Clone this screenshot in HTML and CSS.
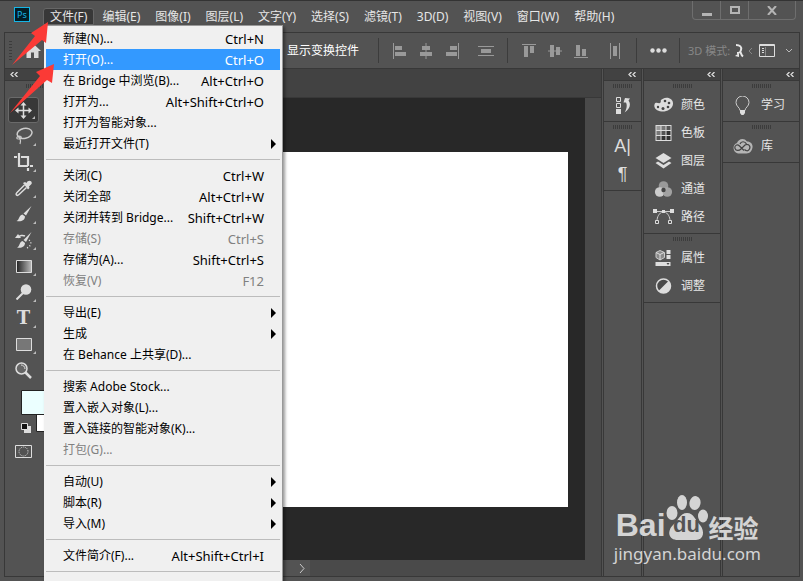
FILE: index.html
```html
<!DOCTYPE html>
<html lang="zh-CN">
<head>
	<meta charset="UTF-8">
	<title>Photoshop</title>
	<link rel="stylesheet" href="styles.css">
</head>
<body>
	<div class="app">
		<header class="titlebar">
			<span class="logo">Ps</span>
			<nav class="menubar">
				<button class="active">文件(F)</button>
				<button>编辑(E)</button>
				<button>图像(I)</button>
				<button>图层(L)</button>
				<button>文字(Y)</button>
				<button>选择(S)</button>
				<button>滤镜(T)</button>
				<button>3D(D)</button>
				<button>视图(V)</button>
				<button>窗口(W)</button>
				<button>帮助(H)</button>
			</nav>
			<div class="winbtns">
				<button aria-label="最小化"><svg width="10" height="11"><path d="M0 8h10v3H0z" fill="#b4b4b4"/></svg></button>
				<button aria-label="最大化"><svg width="10" height="8"><path d="M1 1h8v6H1z" fill="none" stroke="#b4b4b4" stroke-width="2"/></svg></button>
				<button class="close" aria-label="关闭"><svg width="10" height="9"><path d="M1 0l8 9M9 0l-8 9" stroke="#b4b4b4" stroke-width="2"/></svg></button>
			</div>
		</header>

		<div class="frame">
			<div class="options">
				<div class="opt-left">
					<span class="vgrip"></span>
					<button class="home" aria-label="主页"><svg width="17" height="15" viewBox="0 0 17 15"><path d="M8.5 0L17 8h-2.500v7H10V9.500H7V15H2.500V8H0z" fill="#dcdcdc"/></svg></button>
					<label class="transform"><input type="checkbox">显示变换控件</label>
				</div>
				<div class="opt-group">
					<button aria-label="左对齐"><svg width="14" height="16"><path d="M.5 0v16" stroke="#999"/><path d="M2 3h7v4H2zM2 9h11v4H2z" fill="#999"/></svg></button>
					<button aria-label="水平居中"><svg width="12" height="16"><path d="M6 0v16" stroke="#999"/><path d="M2 3h8v4H2zM0 9h12v4H0z" fill="#999"/></svg></button>
					<button aria-label="右对齐"><svg width="14" height="16"><path d="M13.500 0v16" stroke="#999"/><path d="M5 3h7v4H5zM1 9h11v4H1z" fill="#999"/></svg></button>
					<button class="dist" aria-label="垂直分布"><svg width="16" height="10"><path d="M0 .5h16M0 9.500h16" stroke="#999"/><path d="M3 3h10v4H3z" fill="#999"/></svg></button>
				</div>
				<div class="opt-group">
					<button aria-label="顶对齐"><svg width="14" height="14"><path d="M0 .5h14" stroke="#999"/><path d="M2 2h4v11H2zM8 2h4v7H8z" fill="#999"/></svg></button>
					<button aria-label="垂直居中"><svg width="14" height="12"><path d="M0 6h14" stroke="#999"/><path d="M2 0h4v12H2zM8 2h4v8H8z" fill="#999"/></svg></button>
					<button aria-label="底对齐"><svg width="14" height="14"><path d="M0 13.500h14" stroke="#999"/><path d="M2 1h4v11H2zM8 5h4v7H8z" fill="#999"/></svg></button>
					<button class="dist" aria-label="水平分布"><svg width="10" height="16"><path d="M.5 0v16M9.500 0v16" stroke="#999"/><path d="M3 3h4v10H3z" fill="#999"/></svg></button>
				</div>
				<button class="more" aria-label="更多"><svg width="17" height="5"><circle cx="2.500" cy="2.500" r="2.200" fill="#ddd"/><circle cx="8.500" cy="2.500" r="2.200" fill="#ddd"/><circle cx="14.500" cy="2.500" r="2.200" fill="#ddd"/></svg></button>
				<div class="mode">
					<span>3D 模式:</span>
					<svg class="orbit" width="18" height="14" viewBox="0 0 18 14"><path d="M1 1c4 0 6 2 5 5s-2 3-4 3M5 7c1 2 1 4 3 5.500" stroke="#e6e6e6" stroke-width="2" fill="none"/><path d="M0 12l4-3v4z" fill="#e6e6e6"/><path d="M17 4l-3 3 3 3" stroke="#888" fill="none"/></svg>
					<button aria-label="工作区"><svg width="16" height="13"><path d="M.5.5h15v12H.5z" fill="none" stroke="#ddd"/><path d="M1 1.500h14" stroke="#ddd"/><path d="M3 4h2v1H3zM3 6h2v1H3zM3 8h2v1H3z" fill="#ddd"/><path d="M6.500 3v9" stroke="#888"/></svg></button>
					<svg class="chev" width="8" height="6"><path d="M1 1l3 3 3-3" stroke="#bbb" fill="none"/></svg>
				</div>
			</div>

			<div class="workspace">
				<div class="tools">
					<div class="dockhead"><svg width="8" height="5"><path d="M3.500 0L1 2.500 3.500 5M7.500 0L5 2.500 7.500 5" stroke="#ddd" stroke-width="1.300" fill="none"/></svg></div>
					<span class="grip"></span>
					<button class="tool on" aria-label="移动"><svg width="17" height="17" viewBox="0 0 17 17"><path d="M8.500 2v13M2 8.500h13" stroke="#ddd" stroke-width="1.500"/><path d="M8.500 0l3 3.500h-6zM8.500 17l3-3.500h-6zM0 8.500l3.500-3v6zM17 8.500l-3.500-3v6z" fill="#ddd"/></svg></button>
					<button class="tool" aria-label="套索"><svg width="18" height="18" viewBox="0 0 18 18"><ellipse cx="9.500" cy="6.500" rx="7.500" ry="5" transform="rotate(-12 9 6)" fill="none" stroke="#ccc" stroke-width="1.500"/><path d="M4 9c-3 1-3 3 0 3s3-3 0-3c0 2 3 4 1 8" fill="none" stroke="#ccc" stroke-width="1.200"/></svg></button>
					<button class="tool" aria-label="裁剪"><svg width="19" height="18" viewBox="0 0 19 18"><path d="M5 0v13h9M0 4h3M7 4h7v9M14 15v3M16 13h3" fill="none" stroke="#ddd" stroke-width="2.200"/></svg></button>
					<button class="tool" aria-label="吸管"><svg width="17" height="17" viewBox="0 0 17 17"><path d="M9.500 5L2 12.500c-2 2 0 4 2 2L11.500 7.500" fill="none" stroke="#ddd" stroke-width="1.500"/><path d="M8 3l2-1 1.500 1C13-1 18 1 16.500 4L14 6.500 14.500 8 13 9.500z" fill="#ddd"/></svg></button>
					<button class="tool" aria-label="画笔"><svg width="16" height="16" viewBox="0 0 16 16"><path d="M15.500 0L10 9.500 7.500 7.500z" fill="#ddd"/><path d="M6.500 8.500L9 10.500c0 4-4 5.500-8.500 4.500 3-1 2-5.500 6-6.500z" fill="#ddd"/></svg></button>
					<button class="tool" aria-label="历史记录画笔"><svg width="18" height="17" viewBox="0 0 18 17"><path d="M16.500 0L11 10 8.500 8z" fill="#ddd"/><path d="M7.500 9L10 11c0 4-4 5.500-8 4.500 3-1 2-5.500 5.500-6.500z" fill="#ddd"/><path d="M3 6c1-3 5-3 7-2" stroke="#ddd" stroke-width="1.500" fill="none"/><path d="M0 6h6L3 2z" fill="#ddd"/><path d="M14 8c3 2 2 6-2 8" stroke="#ddd" stroke-width="1.500" stroke-dasharray="1 2" fill="none"/></svg></button>
					<button class="tool" aria-label="渐变"><svg width="16" height="13"><defs><linearGradient id="g"><stop stop-color="#222"/><stop offset="1" stop-color="#bbb"/></linearGradient></defs><path d="M.5.5h15v12H.5z" fill="url(#g)" stroke="#ddd"/></svg></button>
					<button class="tool" aria-label="减淡"><svg width="16" height="16" viewBox="0 0 16 16"><circle cx="10" cy="5.500" r="5.300" fill="#ddd"/><path d="M7 9l-6.500 6.500" stroke="#ddd" stroke-width="2"/></svg></button>
					<button class="tool letter">T</button>
					<button class="tool" aria-label="矩形"><svg width="16" height="13"><path d="M.5.5h15v12H.5z" fill="#777" stroke="#ddd"/></svg></button>
					<button class="tool plain" aria-label="缩放"><svg width="17" height="17" viewBox="0 0 17 17"><circle cx="6.500" cy="6.500" r="5.500" fill="#666" stroke="#ddd" stroke-width="1.500"/><path d="M10.500 10.500l5.500 5.500" stroke="#ddd" stroke-width="2.500"/><path d="M6 3c2 0 4 1.500 4 4" stroke="#ddd" fill="none"/></svg></button>
					<div class="swatches">
						<svg class="colors" width="40" height="44"><path d="M15.500 16.500h24v25h-24z" fill="#fff" stroke="#222"/><path d="M.5.5h24v24H.5z" fill="#ebffff" stroke="#222"/></svg>
						<svg class="reset" width="10" height="10"><path d="M3 3h7v7H3z" fill="#ddd"/><path d="M.5.500h6v6h-6z" fill="#111" stroke="#ddd"/></svg>
					</div>
					<button class="mask" aria-label="快速蒙版"><svg width="17" height="13"><path d="M.5.5h16v12H.5z" fill="none" stroke="#ddd"/><circle cx="8.500" cy="6.500" r="4.500" fill="none" stroke="#ddd" stroke-dasharray="1 1"/></svg></button>
				</div>

				<main class="document">
					<div class="tabs"></div>
					<div class="view">
						<div class="canvas"><div class="paper"></div></div>
						<div class="scroll"></div>
					</div>
					<div class="status">
						<svg width="7" height="11"><path d="M1 1l4 4.500L1 10" stroke="#ccc" fill="none"/></svg>
					</div>
				</main>

				<aside class="dock narrow">
					<div class="dockhead"><svg width="8" height="5"><path d="M3.500 0L1 2.500 3.500 5M7.500 0L5 2.500 7.500 5" stroke="#ddd" stroke-width="1.300" fill="none"/></svg></div>
					<section class="panel">
						<span class="grip"></span>
						<button aria-label="历史记录"><svg width="14" height="17" viewBox="0 0 14 17"><path d="M.5.5h4v4h-4zM.5 6.500h4v4h-4z" fill="none" stroke="#ddd"/><path d="M0 12h5v5H0z" fill="#ddd"/><path d="M7.500 5.500L9 1l5 .5-1.500 2c3 4 1 9-4 12 2-3 3-7 1.500-10z" fill="#ddd"/></svg></button>
					</section>
					<section class="panel">
						<span class="grip"></span>
						<button class="char">A|</button>
						<button class="char">¶</button>
					</section>
				</aside>

				<aside class="dock">
					<div class="dockhead"><svg width="8" height="5"><path d="M3.500 0L1 2.500 3.500 5M7.500 0L5 2.500 7.500 5" stroke="#ddd" stroke-width="1.300" fill="none"/></svg></div>
					<section class="panel">
						<span class="grip"></span>
						<button><svg width="20" height="16" viewBox="0 0 20 16"><path d="M9 2c5-3 11 0 10.500 5S13 15 8 14.500 0 11 1 7.500s5 0 6-2-1-2 2-3.500z" fill="#ddd"/><circle cx="11.500" cy="4" r="1.300" fill="#444"/><circle cx="15.500" cy="6" r="1.300" fill="#444"/><circle cx="14.500" cy="10" r="1.300" fill="#444"/><circle cx="9.500" cy="11.500" r="1.500" fill="#444"/><circle cx="4.500" cy="10" r="1.200" fill="#444"/></svg>颜色</button>
						<button><svg width="16" height="16" viewBox="0 0 16 16"><path d="M0 0h16v16H0z" fill="#ddd"/><path d="M1 1h4v4H1z" fill="#999"/><path d="M6 1h4v4H6zM1 6h4v4H1z" fill="#777"/><path d="M11 1h4v4h-4zM6 6h4v4H6zM1 11h4v4H1z" fill="#555"/><path d="M11 6h4v4h-4zM6 11h4v4H6zM11 11h4v4h-4z" fill="#333"/></svg>色板</button>
						<button><svg width="16" height="16" viewBox="0 0 16 16"><path d="M8 0l8 5-8 5-8-5z" fill="#ddd"/><path d="M0 10l2.500-1.500L8 12l5.500-3.500L16 10l-8 5.500z" fill="#ddd"/></svg>图层</button>
						<button><svg width="18" height="16" viewBox="0 0 18 16"><circle cx="9" cy="5" r="4.800" fill="#999"/><circle cx="5.200" cy="11" r="4.800" fill="#ccc"/><circle cx="12.800" cy="11" r="4.800" fill="#aaa" fill-opacity=".9"/><circle cx="9" cy="9" r="2.200" fill="#444"/></svg>通道</button>
						<button><svg width="21" height="16" viewBox="0 0 21 16"><path d="M2 2.500h17M10 2.500C6 4 4 8 4 12M11 2.500c4 1.500 6 5.500 6 9.500" stroke="#ccc" fill="none"/><path d="M0 0h4v4H0zM17 0h4v4h-4zM9 1h3v3H9z" fill="#ddd"/><path d="M2.500 11.500h3v3h-3zM15.500 11.500h3v3h-3z" stroke="#ddd" fill="#535353"/></svg>路径</button>
					</section>
					<section class="panel">
						<span class="grip"></span>
						<button><svg width="16" height="16" viewBox="0 0 16 16"><path d="M4.500.5L9 2.500v5l-4.500 2.500L.5 7.500v-5z" fill="#888" stroke="#ccc"/><path d="M.5 2.500l4 2 4-2M4.500 4.500V10" stroke="#ddd" fill="none"/><path d="M11 0h4v4h-4zM11 5h4v4h-4zM0 12h15v4H0z" fill="#ddd"/><path d="M11 13h3l-1.500 2z" fill="#444"/></svg>属性</button>
						<button><svg width="16" height="16" viewBox="0 0 16 16"><circle cx="8" cy="8" r="7" fill="#4a4a4a" stroke="#ddd" stroke-width="1.500"/><path d="M13 3A7 7 0 0 1 3 13z" fill="#ddd"/></svg>调整</button>
					</section>
				</aside>

				<aside class="dock">
					<div class="dockhead"><svg width="8" height="5"><path d="M3.500 0L1 2.500 3.500 5M7.500 0L5 2.500 7.500 5" stroke="#ddd" stroke-width="1.300" fill="none"/></svg></div>
					<section class="panel">
						<span class="grip"></span>
						<button><svg width="14" height="19" viewBox="0 0 14 19"><path d="M4.500 14.500c0-3-4-4-4-8a6.300 6.300 0 0 1 13 0c0 4-4 5-4 8z" fill="none" stroke="#ccc"/><path d="M4.500 14h5v3L8 19H6l-1.500-2z" fill="#ddd"/></svg>学习</button>
					</section>
					<section class="panel">
						<span class="grip"></span>
						<button><svg width="21" height="16" viewBox="0 0 21 16"><path d="M6 15.500a5.500 5.500 0 0 1-1-10.500C6 1 12-1 15 3.500c4 0 6 3 5.500 6s-2.500 6-6 6z" fill="#b5b5b5"/><path d="M12 12.500L7.500 8C5 5.500 2 8 3 10.500s4 2.500 6 .5l4-4c3-2 6 1 4.500 4s-4 1.500-5 .5M8 6c1-3 5-3 6.500 0" stroke="#444" stroke-width="1.200" fill="none"/></svg>库</button>
					</section>
				</aside>
			</div>
		</div>

		<div class="menu">
			<ul>
				<li><button><span>新建(N)...</span><kbd>Ctrl+N</kbd></button></li>
				<li><button class="selected"><span>打开(O)...</span><kbd>Ctrl+O</kbd></button></li>
				<li><button><span>在 Bridge 中浏览(B)...</span><kbd>Alt+Ctrl+O</kbd></button></li>
				<li><button><span>打开为...</span><kbd>Alt+Shift+Ctrl+O</kbd></button></li>
				<li><button><span>打开为智能对象...</span></button></li>
				<li><button class="sub"><span>最近打开文件(T)</span></button></li>
			</ul>
			<ul>
				<li><button><span>关闭(C)</span><kbd>Ctrl+W</kbd></button></li>
				<li><button><span>关闭全部</span><kbd>Alt+Ctrl+W</kbd></button></li>
				<li><button><span>关闭并转到 Bridge...</span><kbd>Shift+Ctrl+W</kbd></button></li>
				<li><button disabled><span>存储(S)</span><kbd>Ctrl+S</kbd></button></li>
				<li><button><span>存储为(A)...</span><kbd>Shift+Ctrl+S</kbd></button></li>
				<li><button disabled><span>恢复(V)</span><kbd>F12</kbd></button></li>
			</ul>
			<ul>
				<li><button class="sub"><span>导出(E)</span></button></li>
				<li><button class="sub"><span>生成</span></button></li>
				<li><button><span>在 Behance 上共享(D)...</span></button></li>
			</ul>
			<ul>
				<li><button><span>搜索 Adobe Stock...</span></button></li>
				<li><button><span>置入嵌入对象(L)...</span></button></li>
				<li><button><span>置入链接的智能对象(K)...</span></button></li>
				<li><button disabled><span>打包(G)...</span></button></li>
			</ul>
			<ul>
				<li><button class="sub"><span>自动(U)</span></button></li>
				<li><button class="sub"><span>脚本(R)</span></button></li>
				<li><button class="sub"><span>导入(M)</span></button></li>
			</ul>
			<ul>
				<li><button><span>文件简介(F)...</span><kbd>Alt+Shift+Ctrl+I</kbd></button></li>
			</ul>
			<ul></ul>
		</div>

		<svg class="arrows" width="60" height="120"><path d="M12 65L35 36l-4-3 17-11-2 21-4-3zM10 113l30-37-4-4 18-8-2 19-5-3z" fill="#fb3a36"/></svg>

		<div class="watermark">
			<div class="brand">
				<b>Bai</b>
				<span class="paw">
					<svg width="42" height="46" viewBox="0 0 42 46"><g fill="#d4d4d4"><ellipse cx="6" cy="18" rx="5.500" ry="7"/><ellipse cx="16" cy="7.500" rx="5" ry="7.500"/><ellipse cx="29" cy="8" rx="5.500" ry="7" transform="rotate(12 29 8)"/><ellipse cx="37" cy="21" rx="5" ry="6.500"/><path d="M21 18c7 0 8 7 13 12 5 6 4 15-4 15H12c-10 0-11-9-5-15 5-4 7-12 14-12z"/></g></svg>
					<b>du</b>
				</span>
				<b class="cn">经验</b>
			</div>
			<div class="site">jingyan.baidu.com</div>
		</div>
	</div>
</body>
</html>
```
FILE: styles.css
```css
*{
	margin: 0;
	padding: 0;
	box-sizing: border-box;
}
body{
	font: 12px/20px "Noto Sans", "Noto Sans CJK SC", sans-serif;
	color: #e6e6e6;
	background: #535353;
}
button{
	font: inherit;
	color: inherit;
	background: none;
	border: none;
}
ul{
	list-style: none;
}
svg{
	display: block;
	flex: none;
}
.app{
	position: relative;
	height: 100vh;
	overflow: hidden;
	display: flex;
	flex-direction: column;
	padding: 0 3px 4px 4px;
	border-top: 1px solid #333;
}
/* 标题栏 */
.titlebar{
	display: flex;
	height: 31px;
	padding-left: 10px;
}
.logo{
	width: 16px;
	height: 15px;
	margin-top: 6px;
	border: 1px solid #16b5e6;
	background: #021d26;
	color: #16b5e6;
	font-size: 9px;
	line-height: 13px;
	text-align: center;
}
.menubar{
	display: flex;
	align-items: flex-start;
	gap: 1px;
	padding: 7px 0 0 13px;
}
.menubar button{
	height: 17px;
	padding: 0 6px;
	line-height: 14px;
	white-space: nowrap;
	border: 1px solid transparent;
}
.menubar .active{
	background: #383838;
	border-color: #666;
	border-radius: 3px 3px 0 0;
}
.winbtns{
	display: flex;
	height: 19px;
	margin: 0 4px 0 auto;
	border: 1px solid #6e6e6e;
	border-top: none;
	border-radius: 0 0 4px 4px;
}
.winbtns button{
	width: 28px;
	display: flex;
	align-items: center;
	justify-content: center;
	border-right: 1px solid #6e6e6e;
}
.winbtns .close{
	width: 46px;
	border-right: none;
}
.frame{
	flex: 1;
	min-height: 0;
	display: flex;
	flex-direction: column;
	border: 1px solid #383838;
}
/* 选项栏 */
.options{
	display: flex;
	align-items: center;
	height: 36px;
	border-bottom: 1px solid #383838;
}
.opt-left{
	width: 373px;
	flex: none;
	display: flex;
	align-items: center;
	justify-content: space-between;
	padding: 0 19px 0 4px;
}
.vgrip{
	width: 3px;
	height: 20px;
	background: repeating-linear-gradient(#3c3c3c 0 1px, transparent 1px 3px);
}
.home{
	margin: 0 auto 0 12px;
}
.transform{
	display: flex;
	align-items: center;
	gap: 6px;
	color: #fff;
}
.opt-group{
	display: flex;
	height: 25px;
	padding: 0 8px;
	border-left: 1px solid #3c3c3c;
}
.opt-group button{
	width: 26px;
	display: flex;
	align-items: center;
	justify-content: center;
}
.opt-group .dist{
	margin-left: 8px;
}
.more{
	width: 44px;
	height: 25px;
	display: flex;
	align-items: center;
	justify-content: center;
	border: solid #3c3c3c;
	border-width: 0 1px;
}
.mode{
	flex: 1;
	display: flex;
	align-items: center;
	padding: 0 6px 0 8px;
	color: #878787;
	font-size: 11px;
	white-space: nowrap;
}
.orbit{
	margin: 0 6px 0 auto;
}
.chev{
	margin-left: 10px;
}
/* 工作区 */
.workspace{
	flex: 1;
	min-height: 0;
	display: flex;
}
.dockhead{
	display: flex;
	justify-content: flex-end;
	height: 12px;
	padding: 3px 5px 0;
	background: #424242;
	border-bottom: 1px solid #383838;
}
.grip{
	display: block;
	width: 19px;
	height: 4px;
	margin: 0 auto;
	background: repeating-linear-gradient(90deg, #3c3c3c 0 1px, transparent 1px 2px);
}
.tools{
	width: 60px;
	flex: none;
}
.tools .dockhead{
	justify-content: flex-start;
}
.tools .grip{
	margin-top: 3px;
	margin-bottom: 9px;
}
.tool{
	position: relative;
	display: flex;
	align-items: center;
	justify-content: center;
	width: 31px;
	height: 26px;
	margin-left: 3px;
}
.tool::after{
	content: "";
	position: absolute;
	right: 3px;
	bottom: 3px;
	border: solid transparent;
	border-width: 3px 0 0 3px;
	border-right: 0 solid;
	border-bottom: 3px solid #bbb;
}
.tool.plain::after{
	display: none;
}
.tool.on{
	background: #383838;
	border: 1px solid #6a6a6a;
	border-radius: 3px;
}
.letter{
	font: bold 18px/26px "DejaVu Serif", serif;
	color: #ddd;
}
.swatches{
	display: flex;
	flex-direction: column;
	height: 55px;
	padding: 7px 0 0 16px;
}
.reset{
	margin-top: -11px;
}
.mask{
	display: block;
	margin: 7px 0 0 10px;
}
.document{
	flex: 1;
	min-width: 0;
	display: flex;
	flex-direction: column;
	border-right: 1px solid #383838;
}
.tabs{
	height: 29px;
	background: #424242;
	border-bottom: 1px solid #383838;
}
.view{
	flex: 1;
	display: flex;
}
.canvas{
	flex: 1;
	display: flex;
	padding: 54px 17px 53px;
	background: #282828;
}
.paper{
	flex: 1;
	background: #fff;
}
.scroll{
	width: 16px;
	background: #4a4a4a;
}
.status{
	display: flex;
	align-items: center;
	height: 16px;
	padding-left: 234px;
	background: linear-gradient(90deg, #535353 245px, #4a4a4a 245px);
}
/* 面板 */
.dock{
	width: 78px;
	flex: none;
	margin-left: 1px;
	border: solid #383838;
	border-width: 0 1px;
}
.dock:last-child{
	width: 77px;
	border-right: none;
}
.narrow{
	width: 39px;
}
.panel{
	padding: 3px 0 2px;
	border-bottom: 1px solid #383838;
}
.panel .grip{
	margin-bottom: 3px;
}
.panel button{
	display: flex;
	align-items: center;
	gap: 7px;
	width: 100%;
	height: 28px;
	padding-left: 9px;
	white-space: nowrap;
}
.panel button svg{
	width: 21px;
}
.dock:last-child button{
	gap: 8px;
}
.narrow .panel button svg{
	width: 14px;
}
.narrow .panel button{
	padding: 0;
	justify-content: center;
}
.narrow .char{
	font: 18px/28px "Liberation Sans", sans-serif;
	color: #ddd;
}
/* 文件菜单 */
.menu{
	position: absolute;
	left: 44px;
	top: 24px;
	bottom: -8px;
	width: 239px;
	padding: 2px 2px 0;
	background: #f0f0f0;
	border: solid #999;
	border-width: 1px 1px 0 0;
	box-shadow: 2px 2px 3px rgba(0,0,0,.4);
	color: #000;
}
.menu ul + ul{
	margin-top: 5px;
	padding-top: 5px;
	border-top: 1px solid #bcbcbc;
}
.menu button{
	display: flex;
	align-items: center;
	justify-content: space-between;
	width: 100%;
	height: 21px;
	padding: 0 16px 0 17px;
	white-space: nowrap;
}
.menu kbd{
	font: 13px/20px "Noto Sans", sans-serif;
}
.menu button:disabled{
	color: #808080;
}
.menu .selected{
	background: #3399ff;
	color: #fff;
}
.menu .sub{
	padding-right: 4px;
}
.menu .sub::after{
	content: "";
	border: solid transparent;
	border-width: 5px 0 5px 5px;
	border-left-color: #000;
}
.arrows{
	position: absolute;
	left: 0;
	top: -1px;
}
/* 水印 */
.watermark{
	position: absolute;
	right: 42px;
	bottom: 14px;
	color: #d4d4d4;
}
.brand{
	display: flex;
	align-items: flex-end;
	height: 46px;
	padding-left: 2px;
}
.brand b{
	font: bold 32px/32px "Liberation Sans", sans-serif;
}
.paw{
	position: relative;
	margin-right: 1px;
}
.paw b{
	position: absolute;
	left: 0;
	right: 0;
	bottom: 3px;
	color: #535353;
	font-size: 22px;
	line-height: 26px;
	text-align: center;
}
.brand .cn{
	font: bold 25px/28px "Noto Sans CJK SC", sans-serif;
}
.site{
	font: 17px/26px "Noto Sans", sans-serif;
}
```
